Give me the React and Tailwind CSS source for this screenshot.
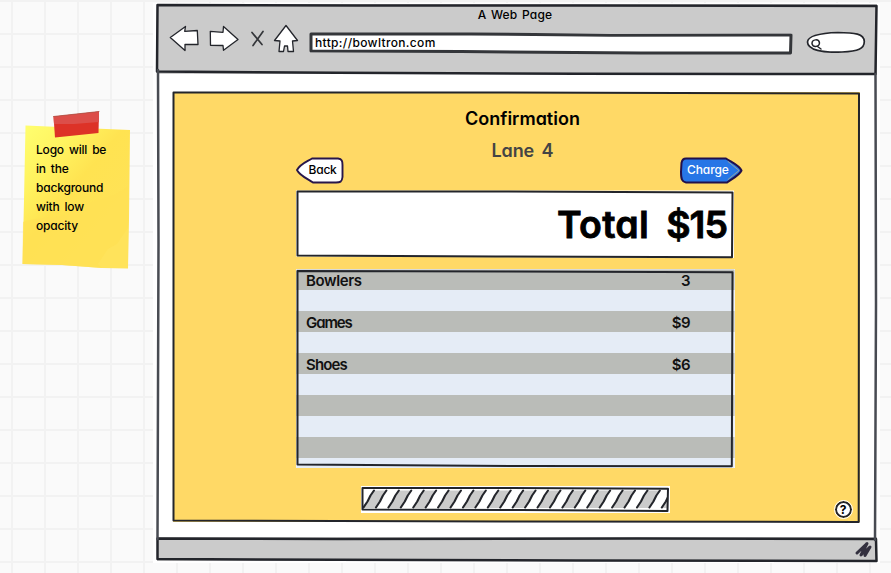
import React from "react";

const INK = "#23252b";

// Hand-drawn outline stretched over its box; coordinates are local pixels.
function Sketch({ w, h, children, className = "" }) {
  return (
    <svg
      className={`pointer-events-none absolute left-0 top-0 overflow-visible ${className}`}
      width={w}
      height={h}
      viewBox={`0 0 ${w} ${h}`}
      fill="none"
      stroke={INK}
      strokeLinejoin="round"
      strokeLinecap="round"
    >
      {children}
    </svg>
  );
}

function StickyNote() {
  return (
    <div className="relative ml-[22px] mt-[110px] h-[160px] w-[110px]">
      <Sketch w={110} h={160}>
        <defs>
          <linearGradient id="note" x1="0" y1="0" x2="0.7" y2="0.8">
            <stop offset="0" stopColor="#ffff70" />
            <stop offset="0.35" stopColor="#fff25e" />
            <stop offset="0.6" stopColor="#ffe351" />
            <stop offset="1" stopColor="#ffe257" />
          </linearGradient>
        </defs>
        <g stroke="none">
          <path d="M3.5 15.5L60 18L108 20L107 110L106 158.5L80 158L40 155L0.5 154L2 90Z" fill="url(#note)" />
          <path d="M1 112C18 105 40 112 62 96C76 87 90 90 106 76L106 158L80 158L40 155L0.5 154Z" fill="#ffe055" opacity="0.65" />
          <path d="M76 154L86 139L95 134L106 118L106 158L80 158Z" fill="#ffe968" opacity="0.35" />
          <path d="M31.5 6.5L77 1.5L76.5 23L33 27.5Z" fill="#dd3227" />
          <path d="M31.5 6.5L77 1.5L77 12L52 14L32 14Z" fill="#dc4e49" />
        </g>
        <path d="M31.5 6.5L77 1.5" stroke="#ad5346" strokeWidth="0.8" />
      </Sketch>
      <p className="relative whitespace-pre pl-[14px] pt-[30px] text-[12px] font-medium leading-[19px] tracking-[-0.2px] [word-spacing:2px]">
        {"Logo will be\nin the\nbackground\nwith low\nopacity"}
      </p>
    </div>
  );
}

function NavIcons() {
  return (
    <svg width="132" height="32" viewBox="168 23 132 32" fill="#fff" stroke={INK} strokeWidth="1.3" strokeLinejoin="round" strokeLinecap="round">
      <path d="M170.3 37.5L185.5 26.5L184.7 31.3L197.3 30.5L198 44.5L185 44.3L185 50.5Z" />
      <path d="M210.3 31.3L223 32.3L223.5 26.5L238 39.5L223.5 50.3L223 45.5L210.5 45.3Z" />
      <path d="M252 32.5L262 44.5M263 31.5L253 45.5" fill="none" stroke="#34363a" strokeWidth="1.7" />
      <path d="M286 25.5L297.5 40.5L292.5 41L293.5 51.5L288 51.5L287.5 46L284.5 46L283.5 51.5L279 51.5L280 41L274.5 40.5Z" />
    </svg>
  );
}

function Toolbar() {
  return (
    <header className="relative h-[70px] w-[720px] bg-[#cbcbcb]">
      <h1 className="pr-[4px] pt-[3px] text-center text-[12px] font-medium leading-[16px] tracking-[0.2px] [word-spacing:1.2px]">A Web Page</h1>
      <div className="flex items-start">
        <div className="ml-[11px]">
          <NavIcons />
        </div>
        <div className="relative ml-[11px] mt-[10px] h-[20px] w-[481px] bg-white">
          <Sketch w={481} h={20}>
            <path d="M0 1L160 1L300 2.2L480 2L479.5 20L330 20L150 18.5L0 18Z" strokeWidth="3" stroke="#34363a" />
          </Sketch>
          <span className="relative block pl-[4px] pt-[2px] text-[12px] font-medium leading-[15px] tracking-[0.35px]">http://bowltron.com</span>
        </div>
        <svg className="ml-[14px] mt-[8px]" width="60" height="22" viewBox="806 31 60 22" fill="#fff" stroke={INK} strokeWidth="1.7" strokeLinecap="round">
          <path d="M807.5 42C808 35 822 33 838 32.5C855 32.5 864 34 864.3 41.5C864.3 49 858 51 842 52C823 53 807.5 50 807.5 42Z" />
          <path d="M812 43.5C812 39 819 38.5 819.5 43C819 47.5 812.5 47.5 812 43.5ZM817.5 46.5L821 49" strokeWidth="1.5" />
        </svg>
      </div>
      <Sketch w={720} h={70}>
        <path d="M0.5 1L200 1.5L420 1.5L719.5 2L718.5 70L420 69.7L180 68.8L0 67.5Z" strokeWidth="2.5" />
      </Sketch>
    </header>
  );
}

function BackButton() {
  return (
    <button className="relative h-[27px] w-[48px] pl-[12.5px] text-left text-[12px] font-medium leading-[25px] tracking-[-0.2px]">
      <Sketch w={48} h={27}>
        <path d="M1 13C4 7 10 5 16 1.5L42 1.5C46 2 46.5 4 46.5 8L46.5 20C46 25 44 25.5 40 25.5L17 25.5C12 22 4 19 1 13Z" fill="#fff" stroke="#28164a" strokeWidth="1.9" />
      </Sketch>
      <span className="relative -top-px">Back</span>
    </button>
  );
}

function ChargeButton() {
  return (
    <button className="relative h-[27px] w-[63px] pl-[7px] text-left text-[12px] font-medium leading-[25px] tracking-[-0.1px] text-white">
      <Sketch w={63} h={27}>
        <path d="M6 1.5L46 1.5C51 5 59 8 61.5 13.5C59 19 51 22 47 25.5L6 25.5C2 25 1 22 1 15L1.5 6C2 3 3 1.5 6 1.5Z" fill="#2776e6" stroke="#21104b" strokeWidth="2" />
        <path d="M48 4.5L59 13.5L48 22.5" stroke="#c8b67d" strokeWidth="0.7" />
      </Sketch>
      <span className="relative -top-px">Charge</span>
    </button>
  );
}

const rows = [
  ["Bowlers", "3"],
  null,
  ["Games", "$9"],
  null,
  ["Shoes", "$6"],
  null,
  null,
  null,
  null,
  null,
];

function OrderTable() {
  return (
    <div className="relative mt-[11px] h-[199px] w-[439px] overflow-hidden">
      {rows.map((row, i) => (
        <div key={i} className="flex h-[21px] justify-between pl-[10px] pr-[45px] pt-[2px] text-[15px] font-semibold leading-[20px] text-[#111] odd:bg-[#babcb8] even:bg-[#e5ecf6]">
          {row && <span className={i === 0 ? "tracking-[-0.4px]" : i === 2 ? "tracking-[-1.1px]" : "tracking-[-0.85px]"}>{row[0]}</span>}
          {row && <span className="tracking-[-0.5px]">{row[1]}</span>}
        </div>
      ))}
      <Sketch w={439} h={199}>
        <path d="M0.5 0L0.5 198M438.5 0L438.5 199M0 0.5L439 0.5" stroke="#fff" opacity="0.45" strokeWidth="1" />
        <path d="M1.5 2L210 2.5L436.5 3.3L435.8 197.2L230 197L1.5 195.5Z" strokeWidth="2" />
      </Sketch>
    </div>
  );
}

function ProgressBar() {
  const slashes = Array.from({ length: 25 }, (_, i) => 2.5 + i * 12.43);
  return (
    <div className="relative ml-[65px] mt-[18px] h-[27px] w-[309px] overflow-hidden bg-white">
      <Sketch w={309} h={27}>
        <defs>
          <clipPath id="bar"><path d="M2 3H307V24H2Z" /></clipPath>
        </defs>
        <g clipPath="url(#bar)">
          {slashes.map((x, i) => (
            <g key={i}>
              {i % 2 === 0 && <path d={`M${x} 22L${x + 11} 4.5H${x + 22.5}L${x + 12} 22Z`} fill="#cbcbcb" stroke="none" />}
              <path d={`M${x} 21.5L${x + 4} 15.5L${x + 7} 9.5L${x + 10.5} 4.5`} strokeWidth="2.1" />
            </g>
          ))}
        </g>
        <path d="M1.5 2L150 2L307 2.8L306.5 25L160 24L1.5 23.5Z" strokeWidth="2" />
      </Sketch>
    </div>
  );
}

function Panel() {
  return (
    <main className="relative ml-[16px] mt-[18px] h-[430px] w-[687px] bg-[#ffd966]">
      <Sketch w={687} h={430}>
        <path d="M0.5 0.5L300 0.5L686 1.5L685.7 430L330 429.5L0.5 428.5Z" strokeWidth="2" />
      </Sketch>
      <div className="ml-[123px] w-[439px]">
        <h2 className="pl-[14px] pt-[14px] text-center text-[18px] font-semibold leading-[26px]">Confirmation</h2>
        <h3 className="pl-[14px] pt-[6px] text-center text-[18px] font-semibold leading-[26px] tracking-[-0.1px] text-[#444] [word-spacing:3px]">Lane 4</h3>
        <div className="-mt-[8px] flex items-end justify-between">
          <BackButton />
          <div className="-mr-[8px] pt-[1px]"><ChargeButton /></div>
        </div>
        <div className="relative mt-[6px] h-[68px] w-[438px]">
          <Sketch w={438} h={68}>
            <path d="M0 0.5L438 0.5L438 68L0 66.5Z" fill="#fff" stroke="none" />
            <path d="M1.5 1.5L200 1.5L436.5 2.5L436 67.2L200 66.5L1.5 65.5Z" strokeWidth="2" />
          </Sketch>
          <div className="relative flex justify-end gap-[17px] pr-[7px] pt-px text-[37.5px] font-semibold leading-[67px] [-webkit-text-stroke:0.8px_black]">
            <span className="tracking-[0.3px]">Total</span>
            <span className="tracking-[-1px]">$15</span>
          </div>
        </div>
        <OrderTable />
        <ProgressBar />
      </div>
      <button className="absolute left-[661.5px] top-[409px] flex size-[17px] items-center justify-center rounded-full border-2 border-[#23252b] bg-white text-[12px] font-bold leading-none outline outline-1 outline-white">
        ?
      </button>
    </main>
  );
}

function StatusBar() {
  return (
    <footer className="relative mt-[15px] h-[24px] w-[720px] bg-[#cbcbcb]">
      <Sketch w={720} h={24}>
        <path d="M0.5 1.5L180 2L480 1.5L719 2L719.5 24L420 23.5L180 22.8L0.5 22Z" strokeWidth="2.5" />
        <path d="M700 16L710 6.5L704 18L713 10L708 18.5" stroke="#33303f" strokeWidth="3" />
      </Sketch>
    </footer>
  );
}

export default function App() {
  return (
    <div className="flex h-[573px] w-[891px] overflow-hidden bg-[#fafafa] bg-[linear-gradient(to_right,#f2f2f2_2px,transparent_2px),linear-gradient(to_bottom,#f2f2f2_2px,transparent_2px)] bg-[length:33px_33px] bg-[position:11px_0] font-['Inter','Liberation_Sans',sans-serif] text-black [font-feature-settings:'cv11','ss03']">
      <aside className="w-[153px] shrink-0">
        <StickyNote />
      </aside>
      <div className="mt-[3px] h-[560px] w-[727px] shrink-0 bg-white pl-[4px] pt-[1px]">
        <div className="relative w-[720px]">
          <Toolbar />
          <Panel />
          <StatusBar />
          <Sketch w={720} h={557}>
            <path d="M1 66L1.5 240L0.5 535M718.5 70L719 300L718 536" strokeWidth="2.5" stroke="#484b52" />
          </Sketch>
        </div>
      </div>
    </div>
  );
}
